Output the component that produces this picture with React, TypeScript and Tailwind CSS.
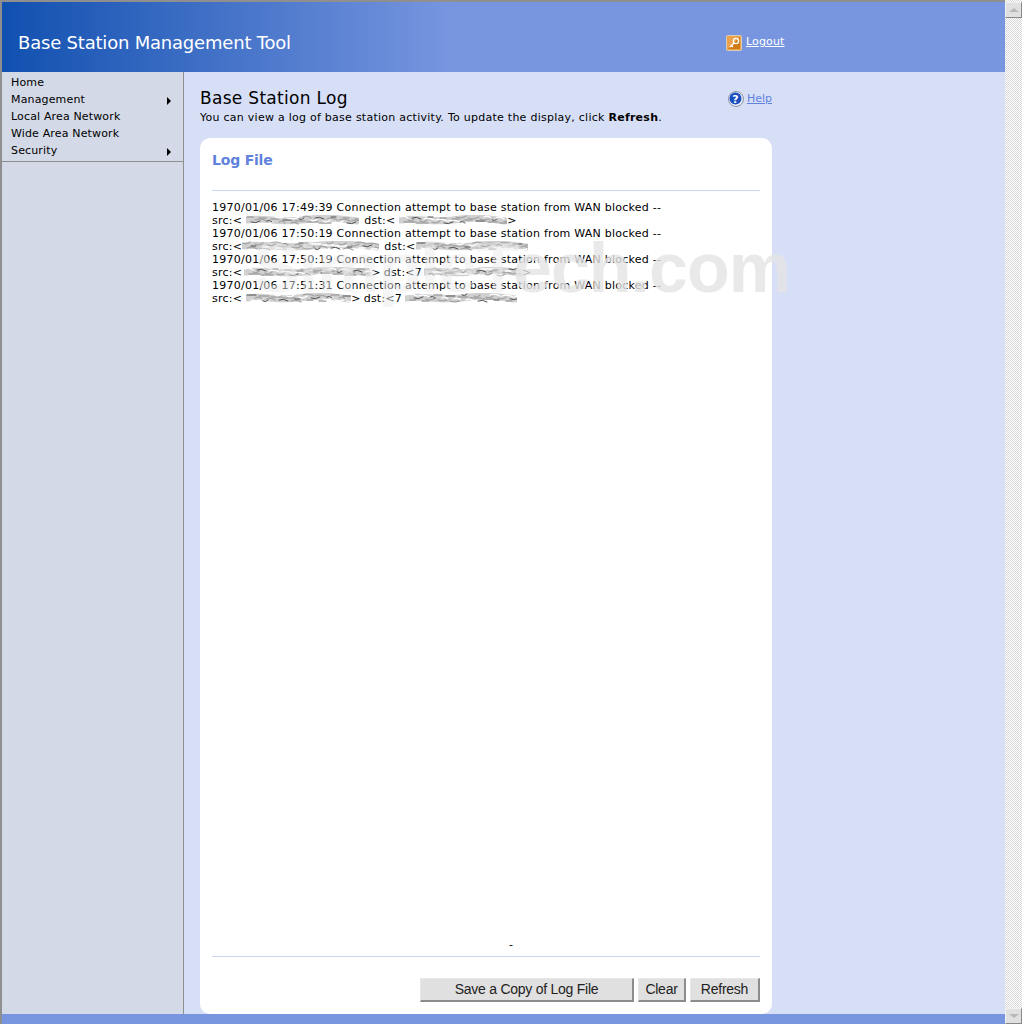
import React from 'react';

const verdana = { fontFamily: '"DejaVu Sans", Verdana, sans-serif' };

// smeared-out redaction over the addresses, one lumpy blob per address
function Scribble({ width, seed }: { width: number; seed: number }) {
    const w = width;
    const lumps = Array.from({ length: Math.floor(w / 4) }, (_, i) => {
        const x = 1 + i * 4 + ((i * seed * 3) % 3);
        const y = 2 + ((i * 5 + seed * 7) % 7);
        const len = 5 + ((i * 3 + seed) % 8);
        const tilt = ((i + seed) % 3) - 1;
        return { x, y, len, tilt, dark: (i * 7 + seed) % 4 === 0, mid: (i + seed * 2) % 3 === 0 };
    });
    return (
        <svg width={w} height="11" viewBox={`0 0 ${w} 11`} className="block shrink-0">
            <path d={`M2 5 C${w * 0.15} 2 ${w * 0.3} 8 ${w * 0.5} 5 S${w * 0.8} 3 ${w - 2} 6`} fill="none" stroke="#d0d0d0" strokeWidth="7" strokeLinecap="round" />
            {lumps.map((l, i) => (
                <path
                    key={i}
                    d={`M${l.x} ${l.y} q${l.len / 2} ${l.tilt * 2} ${l.len} ${-l.tilt}`}
                    fill="none"
                    stroke={l.dark ? '#4e4e4e' : l.mid ? '#ffffff' : '#a4a4a4'}
                    strokeWidth={l.dark ? 1 : 1.3}
                    strokeLinecap="round"
                />
            ))}
        </svg>
    );
}

const logLines = [
    { time: '1970/01/06 17:49:39', src: 113, srcGap: 'ml-[4px]', srcEnd: '', dstGap: 'ml-[5px]', open: '', dst: 108, dstPad: 'ml-[4px]', end: '>' },
    { time: '1970/01/06 17:50:19', src: 137, srcGap: 'ml-[0px]', srcEnd: '', dstGap: 'ml-[5px]', open: '', dst: 112, dstPad: 'ml-[1px]', end: '' },
    { time: '1970/01/06 17:50:19', src: 127, srcGap: 'ml-[2px]', srcEnd: '>', dstGap: 'ml-[3px]', open: '7', dst: 98, dstPad: 'ml-[2px]', end: '>' },
    { time: '1970/01/06 17:51:31', src: 105, srcGap: 'ml-[4px]', srcEnd: '>', dstGap: 'ml-[3px]', open: '7', dst: 112, dstPad: 'ml-[3px]', end: '' },
];

function KeyIcon() {
    return (
        <svg width="16" height="16" viewBox="0 0 16 16" className="shrink-0">
            <rect x="0.5" y="0.5" width="15" height="15" rx="1" fill="#eba24a" stroke="#d8cdb8" />
            <path d="M2 14 L14 2 V14 Z" fill="#cf7a12" />
            <circle cx="10" cy="6" r="2.6" fill="none" stroke="#fff" strokeWidth="1.4" />
            <path d="M8 8 L4 12 M5.5 10.5 L7 12" fill="none" stroke="#fff" strokeWidth="1.4" />
        </svg>
    );
}

function HelpIcon() {
    return (
        <svg width="16" height="16" viewBox="0 0 16 16" className="shrink-0">
            <circle cx="8" cy="8" r="7.5" fill="#e9edf6" stroke="#8a93a8" />
            <circle cx="7.5" cy="7.5" r="6" fill="#1a4fc0" />
            <text x="7.5" y="11.5" textAnchor="middle" fontSize="11" fontWeight="700" fill="#fff" fontFamily="'DejaVu Sans', sans-serif">?</text>
        </svg>
    );
}

function Btn({ label, className }: { label: string; className: string }) {
    return (
        <button
            className={`h-[24px] bg-[#e0e0e0] text-[14px] tracking-[-0.25px] text-[#222] border border-[#e8e8e8] border-r-2 border-b-2 border-r-[#8c8c8c] border-b-[#8c8c8c] ${className}`}
            style={{ fontFamily: '"Liberation Sans", Arial, sans-serif' }}
        >
            {label}
        </button>
    );
}

export default function App() {
    return (
        <div className="flex h-[1024px] w-[1022px] overflow-hidden bg-[#d7dff7] text-[11px] text-black" style={verdana}>
            <div className="flex h-full w-[1005px] flex-col border-l-2 border-t-2 border-[#8f8f8f]">
                <header className="flex h-[70px] shrink-0 items-center bg-[linear-gradient(90deg,#1150b0_0%,#7896e0_45%,#7896e0_100%)] pl-4 pt-[11px]">
                    <h1 className="w-[708px] text-[18px] leading-none tracking-[-0.2px] text-white">Base Station Management Tool</h1>
                    <KeyIcon />
                    <a className="ml-1 text-[11px] tracking-[0.15px] text-white underline">Logout</a>
                </header>

                <div className="flex min-h-0 flex-1">
                    <aside className="w-[182px] shrink-0 border-r border-[#8f8f8f] bg-[#d3d9e6]">
                        <nav className="border-b border-[#8f8f8f] pb-[1px] pt-[3px] tracking-[0.15px]">
                            {['Home', 'Management', 'Local Area Network', 'Wide Area Network', 'Security'].map((item) => (
                                <div key={item} className="flex h-[17px] items-center justify-between pl-[9px] pr-[12px]">
                                    <span>{item}</span>
                                    {(item === 'Management' || item === 'Security') && (
                                        <span className="h-0 w-0 border-y-[4px] border-l-[4px] border-y-transparent border-l-black" />
                                    )}
                                </div>
                            ))}
                        </nav>
                    </aside>

                    <main className="relative flex-1 pl-4">
                        <div className="w-[572px]">
                            <div className="flex h-[36px] items-end justify-between">
                                <h2 className="text-[17px] leading-[20px] tracking-[0.3px]">Base Station Log</h2>
                                <div className="mb-[1px] flex items-center gap-[3px]">
                                    <HelpIcon />
                                    <a className="text-[#5f82dc] underline">Help</a>
                                </div>
                            </div>
                            <p className="mt-[3px] leading-[14px] tracking-[0.26px]">
                                You can view a log of base station activity. To update the display, click <b>Refresh</b>.
                            </p>
                            <section className="mt-[13px] flex h-[876px] flex-col rounded-[10px] bg-white px-3">
                                <h3 className="mt-[13px] h-[39px] text-[14px] font-bold leading-[18px] tracking-[-0.2px] text-[#5f82dc]">Log File</h3>
                                <div className="border-t border-[#c9d7f0] pt-[10px]">
                                    {logLines.map((line, i) => (
                                        <div key={i} className="leading-[13px] tracking-[0.24px]">
                                            <div className="h-[13px] whitespace-nowrap">{line.time} Connection attempt to base station from WAN blocked --</div>
                                            <div className="flex h-[13px] items-center whitespace-nowrap">
                                                <span>src:&lt;</span>
                                                <span className={line.srcGap}><Scribble width={line.src} seed={i + 1} /></span>
                                                <span>{line.srcEnd}</span>
                                                <span className={line.dstGap}>dst:&lt;{line.open}</span>
                                                <span className={line.dstPad}><Scribble width={line.dst} seed={i + 3} /></span>
                                                <span>{line.end}</span>
                                            </div>
                                        </div>
                                    ))}
                                </div>
                                <div className="mt-auto h-[18px] pl-[50px] text-center leading-[14px]">-</div>
                                <div className="flex h-[58px] justify-end gap-[4px] border-t border-[#c9d7f0] pt-[21px]">
                                    <Btn label="Save a Copy of Log File" className="w-[214px]" />
                                    <Btn label="Clear" className="w-[48px]" />
                                    <Btn label="Refresh" className="w-[70px]" />
                                </div>
                            </section>
                        </div>
                        <span className="pointer-events-none absolute right-[215px] top-[161px] whitespace-nowrap text-[70px] font-bold leading-none tracking-[-1px] text-[#e4e4e4]/80" style={{ fontFamily: '"Liberation Sans", Arial, sans-serif' }}>
                            <span className="text-[#ececec]/50">SimpleT</span>ech.com
                        </span>
                    </main>
                </div>

                <div className="h-[10px] shrink-0 bg-[#7896e0]" />
            </div>

            <div className="flex h-full w-[17px] flex-col justify-between bg-[repeating-conic-gradient(#d8d8d8_0%_25%,#ffffff_0%_50%)] bg-[length:2px_2px]">
                <div className="mt-[2px] flex h-[16px] items-center justify-center border border-[#f0f0f0] border-b-[#888] border-r-[#888] bg-[#e0e0e0]">
                    <span className="h-0 w-0 border-x-[5px] border-b-[4px] border-x-transparent border-b-[#b8b8b8]" />
                </div>
                <div className="flex h-[16px] items-center justify-center border border-[#f0f0f0] border-b-[#888] border-r-[#888] bg-[#e0e0e0]">
                    <span className="h-0 w-0 border-x-[5px] border-t-[4px] border-x-transparent border-t-[#b8b8b8]" />
                </div>
            </div>
        </div>
    );
}
